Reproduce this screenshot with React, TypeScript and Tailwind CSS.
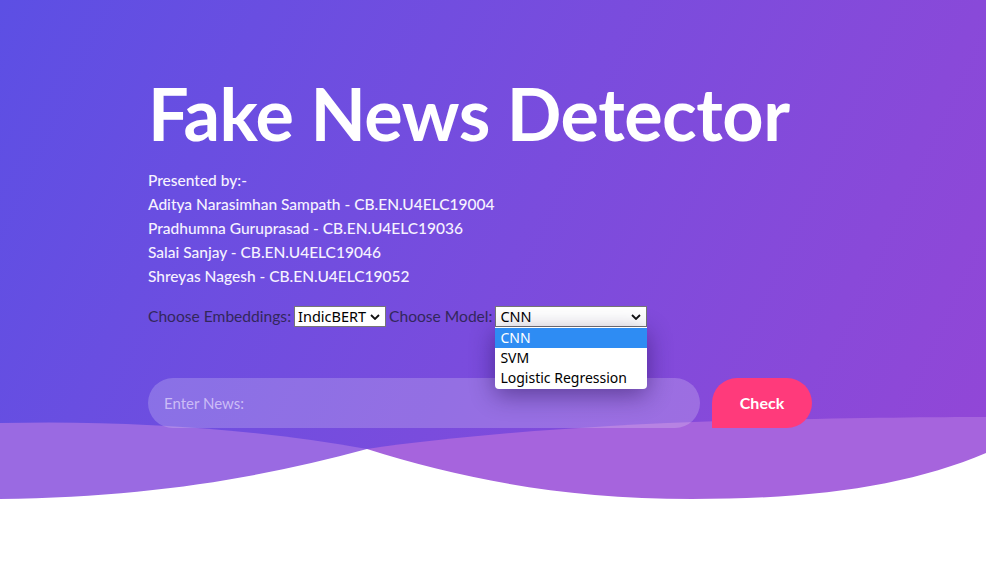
import { useState } from "react";

const members = [
  "Aditya Narasimhan Sampath - CB.EN.U4ELC19004",
  "Pradhumna Guruprasad - CB.EN.U4ELC19036",
  "Salai Sanjay - CB.EN.U4ELC19046",
  "Shreyas Nagesh - CB.EN.U4ELC19052",
];

const models = ["CNN", "SVM", "Logistic Regression"];

function Chevron() {
  return (
    <svg viewBox="0 0 10 6" className="pointer-events-none absolute right-[6px] top-1/2 h-[6px] w-[10px] -translate-y-1/2">
      <path d="M1 1l4 4 4-4" fill="none" stroke="#111" strokeWidth="1.8" />
    </svg>
  );
}

function Waves() {
  return (
    <svg
      viewBox="0 0 986 162"
      preserveAspectRatio="none"
      className="absolute bottom-0 left-0 h-[162px] w-full"
    >
      <path d="M0 23 C120 20 250 28 367 49 L367 162 L0 162 Z" fill="#9a6ae2" />
      <path d="M367 49 C470 34 600 25 720 21 C840 18 930 17 986 17 L986 162 L367 162 Z" fill="#a664dd" />
      <path
        d="M0 99 C150 97 260 78 367 49 C460 78 560 99 692 99 C820 99 910 85 986 53 L986 162 L0 162 Z"
        fill="#ffffff"
      />
    </svg>
  );
}

export default function App() {
  const [embedding, setEmbedding] = useState("IndicBERT");
  const [model, setModel] = useState("CNN");
  const [news, setNews] = useState("");

  return (
    <div className="relative h-[562px] w-full overflow-hidden bg-linear-115 from-[#5c4fe4] to-[#9446d6] font-['Lato',sans-serif]">
      <Waves />

      <main className="relative px-[148px] pt-[77px]">
        <h1 className="text-[72px] font-bold leading-none tracking-[-0.5px] text-white">
          Fake News Detector
        </h1>

        <div className="mt-[19px] text-[15.5px] font-medium leading-6 text-[#f6f2ff]">
          <p>Presented by:-</p>
          {members.map((m) => (
            <p key={m}>{m}</p>
          ))}
        </div>

        <div className="mt-[17px] flex items-center gap-[3px] text-[15.6px] text-[#33275c]">
          <span>Choose Embeddings:</span>
          <div className="relative">
            <select
              value={embedding}
              onChange={(e) => setEmbedding(e.target.value)}
              className="h-[21px] w-[92px] appearance-none border border-[#767676] bg-white pl-[3px] font-['Noto_Sans',sans-serif] text-[14.5px] leading-none text-black"
            >
              <option>IndicBERT</option>
              <option>MuRIL</option>
            </select>
            <Chevron />
          </div>
          <span>Choose Model:</span>
          <div className="relative">
            <select
              value={model}
              onChange={(e) => setModel(e.target.value)}
              className="h-[21px] w-[152px] appearance-none border border-[#767676] bg-white pl-[4px] font-['Noto_Sans',sans-serif] text-[14.5px] leading-none text-black"
            >
              {models.map((m) => (
                <option key={m}>{m}</option>
              ))}
            </select>
            <Chevron />

            <ul className="absolute left-0 top-[22px] z-10 w-[152px] overflow-hidden rounded-b-[4px] bg-white py-[1px] font-['Noto_Sans',sans-serif] text-[14px] leading-[20px] text-black shadow-[0_6px_24px_rgba(20,0,60,0.45)]">
              {models.map((m) => (
                <li key={m} className={`px-[5px] ${m === model ? "bg-[#2e8cf3] text-white" : ""}`}>
                  {m}
                </li>
              ))}
            </ul>
          </div>
        </div>

        <div className="mt-[50px] flex items-center gap-[12px]">
          <input
            value={news}
            onChange={(e) => setNews(e.target.value)}
            placeholder="Enter News:"
            className="h-[50px] w-[552px] rounded-[25px] bg-white/20 px-[16px] text-[15px] text-white outline-none placeholder:text-[#cbbcf6]"
          />
          <button className="h-[50px] w-[100px] rounded-[25px] rounded-bl-none bg-[#ff3a7b] text-[16px] font-bold text-white">
            Check
          </button>
        </div>
      </main>
    </div>
  );
}
